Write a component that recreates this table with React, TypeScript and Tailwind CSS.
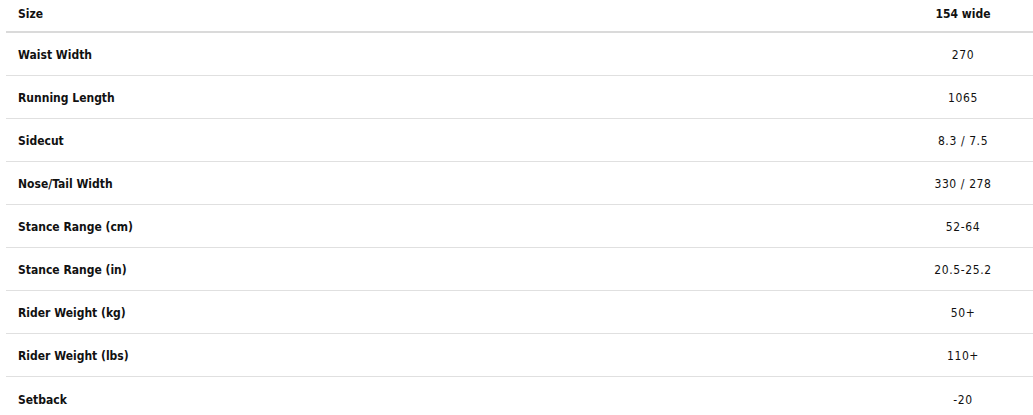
const specs: [string, string][] = [
  ["Waist Width", "270"],
  ["Running Length", "1065"],
  ["Sidecut", "8.3 / 7.5"],
  ["Nose/Tail Width", "330 / 278"],
  ["Stance Range (cm)", "52-64"],
  ["Stance Range (in)", "20.5-25.2"],
  ["Rider Weight (kg)", "50+"],
  ["Rider Weight (lbs)", "110+"],
  ["Setback", "-20"],
];

export default function App() {
  return (
    <div
      className="h-[415px] w-[1033px] overflow-hidden bg-white pl-[6px] text-[12px] text-[#111]"
      style={{ fontFamily: '"DejaVu Sans Condensed", "DejaVu Sans", sans-serif' }}
    >
      <div className="grid h-[33px] grid-cols-[1fr_140px] items-start border-b-2 border-[#dadada] pt-[5px]">
        <div className="pl-[12px] font-bold">Size</div>
        <div className="text-center font-bold">154 wide</div>
      </div>
      {specs.map(([label, value], i) => (
        <div
          key={label}
          className={`grid h-[43px] grid-cols-[1fr_140px] items-center pt-[2px] ${
            i < specs.length - 1 ? "border-b border-[#e0e0e0]" : ""
          }`}
        >
          <div className="pl-[12px] font-bold">{label}</div>
          <div className="text-center font-medium tracking-[0.6px]">{value}</div>
        </div>
      ))}
    </div>
  );
}
